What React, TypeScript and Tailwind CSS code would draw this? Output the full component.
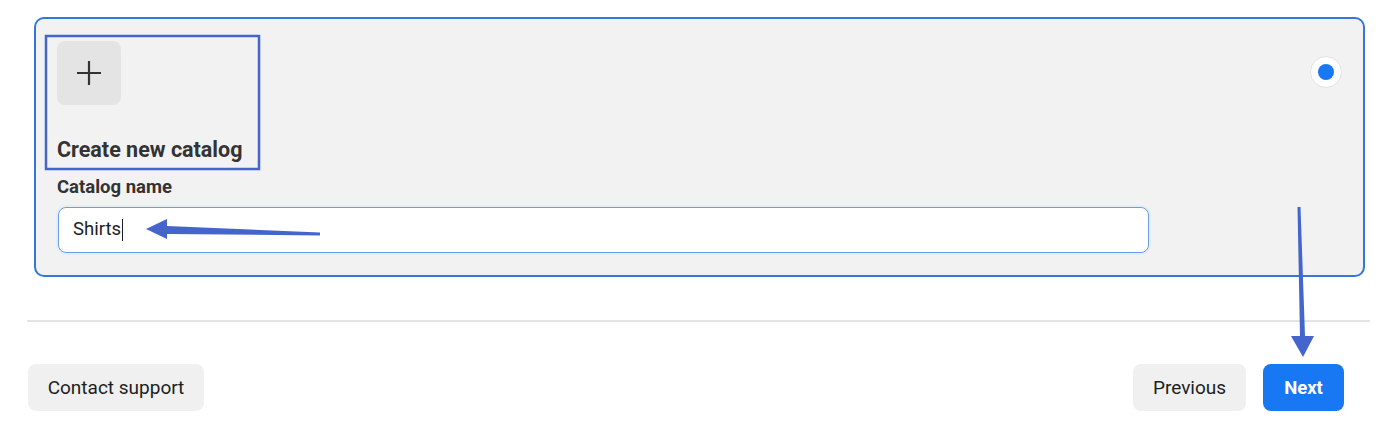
import React from "react";

export default function App() {
  return (
    <div className="relative w-[1390px] h-[439px] bg-white overflow-hidden font-['Roboto','Liberation_Sans',sans-serif] text-[#1c1e21]">
      {/* Card */}
      <div className="ml-[34px] mt-[17px] w-[1331px] h-[260px] rounded-[10px] border-2 border-[#3577d4] bg-[#f2f2f2] px-[21px] pt-[22px] flex justify-between">
        <div className="flex flex-col">
          <div className="w-[64px] h-[64px] rounded-[8px] bg-[#e4e4e4] flex items-center justify-center">
            <svg width="26" height="26" viewBox="0 0 26 26" fill="none" stroke="#333" strokeWidth="2.2" strokeLinecap="butt">
              <path d="M13 1v24M1 13h24" />
            </svg>
          </div>
          <div className="mt-[32px] text-[21.5px] leading-[26px] font-bold text-[#333]">Create new catalog</div>
          <div className="mt-[12px] text-[18.5px] leading-[24px] font-bold text-[#333]">Catalog name</div>
          <div className="mt-[8px] ml-[1px] w-[1091px] h-[46px] rounded-[8px] border border-[#6c9de2] bg-white shadow-[0_0_0_2px_#e3edfb] flex items-center pl-[14px]">
            <span className="text-[18.5px] text-[#1c1e21]">Shirts</span>
            <span className="ml-[1px] w-[1px] h-[22px] bg-[#1c1e21]" />
          </div>
        </div>
        <div className="mt-[15px] w-[32px] h-[32px] rounded-full bg-white border border-[#e2e2e2] flex items-center justify-center">
          <div className="w-[16px] h-[16px] rounded-full bg-[#1877f2]" />
        </div>
      </div>

      {/* Divider */}
      <div className="ml-[27px] mt-[43px] w-[1343px] h-[2px] bg-[#e4e4e4]" />

      {/* Footer buttons */}
      <div className="mt-[42px] ml-[28px] w-[1316px] flex justify-between">
        <button className="w-[176px] h-[47px] pt-[2px] rounded-[8px] bg-[#f0f0f0] text-[19px] text-[#1c1e21]">Contact support</button>
        <div className="flex gap-[17px]">
          <button className="w-[113px] h-[47px] pt-[2px] rounded-[8px] bg-[#f0f0f0] text-[19px] text-[#1c1e21]">Previous</button>
          <button className="w-[81px] h-[47px] pt-[2px] rounded-[8px] bg-[#1877f2] text-[18.5px] font-bold text-white">Next</button>
        </div>
      </div>

      {/* Annotation overlay */}
      <svg className="absolute left-0 top-0 pointer-events-none" width="1390" height="439" viewBox="0 0 1390 439">
        <rect x="46" y="36" width="213" height="133" fill="none" stroke="#4466cc" strokeWidth="2.5" />
        {/* left arrow */}
        <polygon points="320,232.5 167,226 167,219 146,229 167,239 167,234 320,235.5" fill="#4466cc" />
        {/* down arrow */}
        <polygon points="1297.5,207 1300.5,207 1305,336 1314,336 1303,357 1291,336 1300,336" fill="#4466cc" />
      </svg>
    </div>
  );
}
